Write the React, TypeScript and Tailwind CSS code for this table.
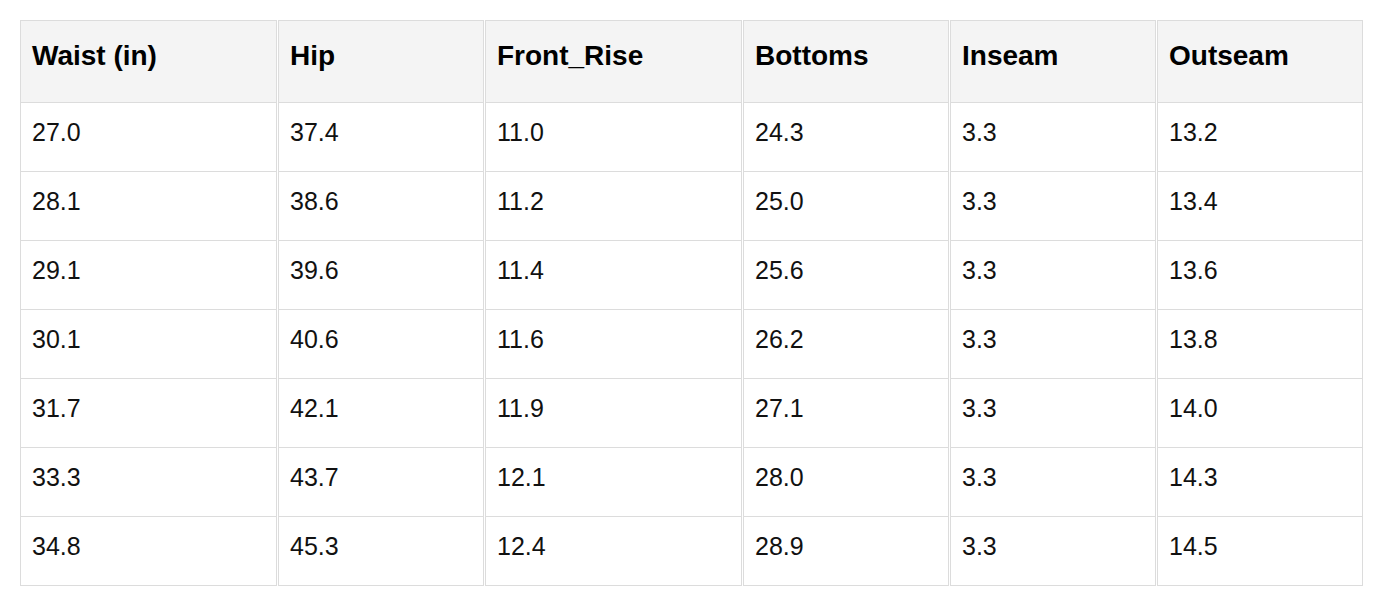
const headers = ["Waist (in)", "Hip", "Front_Rise", "Bottoms", "Inseam", "Outseam"];

const widths = ["w-[257px]", "w-[206px]", "w-[257px]", "w-[206px]", "w-[206px]", "w-[206px]"];

const rows = [
  ["27.0", "37.4", "11.0", "24.3", "3.3", "13.2"],
  ["28.1", "38.6", "11.2", "25.0", "3.3", "13.4"],
  ["29.1", "39.6", "11.4", "25.6", "3.3", "13.6"],
  ["30.1", "40.6", "11.6", "26.2", "3.3", "13.8"],
  ["31.7", "42.1", "11.9", "27.1", "3.3", "14.0"],
  ["33.3", "43.7", "12.1", "28.0", "3.3", "14.3"],
  ["34.8", "45.3", "12.4", "28.9", "3.3", "14.5"],
];

export default function App() {
  return (
    <div className="min-h-[605px] bg-white pt-[20px] font-['Liberation_Sans',Arial,sans-serif]">
      <table className="ml-[19px] border-separate border-spacing-x-[1px] border-spacing-y-0">
        <thead>
          <tr>
            {headers.map((h, i) => (
              <th
                key={h}
                className={`${widths[i]} border border-[#dcdcdc] bg-[#f4f4f4] pl-[11px] pr-[11px] pt-[19px] pb-[30px] text-left align-top text-[28px] leading-[32px] font-bold text-black`}
              >
                {h}
              </th>
            ))}
          </tr>
        </thead>
        <tbody>
          {rows.map((row, r) => (
            <tr key={r}>
              {row.map((cell, c) => (
                <td
                  key={c}
                  className="border-x border-b border-[#dcdcdc] pl-[11px] pr-[11px] pt-[15px] pb-[24px] text-left align-top text-[25px] leading-[29px] text-[#111]"
                >
                  {cell}
                </td>
              ))}
            </tr>
          ))}
        </tbody>
      </table>
    </div>
  );
}
